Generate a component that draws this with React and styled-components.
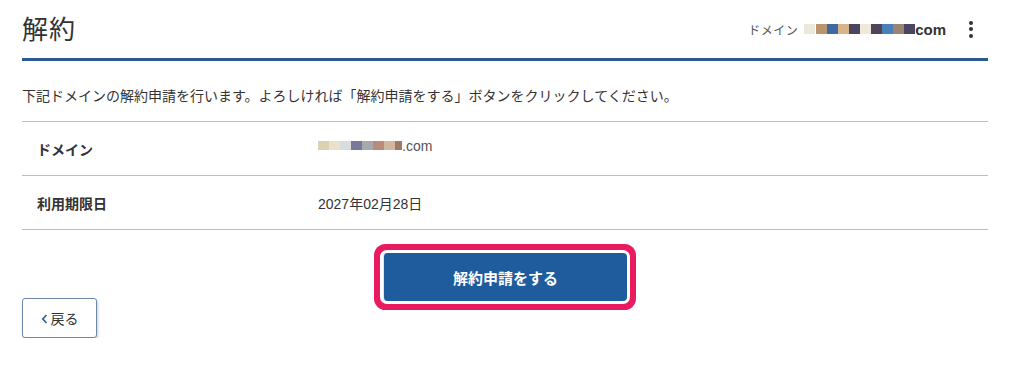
import React from "react";
import styled, { createGlobalStyle } from "styled-components";

const Global = createGlobalStyle`
  body {
    margin: 0;
    background: #fff;
    font-family: "Noto Sans CJK JP", "Liberation Sans", sans-serif;
    color: #333;
  }
`;

const Page = styled.div`
  width: 966px;
  padding: 0 36px 0 22px;
`;

const Header = styled.header`
  display: flex;
  align-items: center;
  justify-content: space-between;
  box-sizing: border-box;
  height: 61px;
  padding-bottom: 4px;
  border-bottom: 3px solid #2a5a8e;
`;

const Title = styled.h1`
  margin: 0;
  font-size: 26px;
  font-weight: 400;
  color: #333;
  letter-spacing: 1px;
`;

const HeaderRight = styled.div`
  display: flex;
  align-items: center;
  padding-top: 4px;
`;

const DomainLabel = styled.span`
  font-size: 12px;
  color: #555;
  margin-right: 6px;
  letter-spacing: 0.5px;
`;

const Blur = styled.span`
  display: inline-flex;
  height: ${(p) => p.h}px;
`;

const Swatch = styled.span`
  display: inline-block;
  width: ${(p) => p.w}px;
  height: 100%;
  background: ${(p) => p.c};
`;

const Tld = styled.span`
  font-family: "Liberation Sans", sans-serif;
  font-size: ${(p) => p.size}px;
  font-weight: ${(p) => (p.bold ? 700 : 400)};
  color: ${(p) => (p.bold ? "#333" : "#555")};
`;

const Kebab = styled.button`
  border: 0;
  background: none;
  padding: 0;
  margin: 0 15px 0 23px;
  display: flex;
  flex-direction: column;
  gap: 2.5px;
  span {
    width: 4px;
    height: 4px;
    border-radius: 50%;
    background: #333;
  }
`;

const Intro = styled.p`
  margin: 25px 0 17px;
  font-size: 14px;
  line-height: 18px;
  color: #333;
`;

const Table = styled.div`
  border-top: 1px solid #b4bfc8;
`;

const Row = styled.div`
  display: grid;
  grid-template-columns: 296px 1fr;
  align-items: center;
  height: 53px;
  border-bottom: 1px solid #b4bfc8;
  font-size: 14px;
`;

const Label = styled.div`
  padding-left: 15px;
  font-weight: 700;
  color: #333;
`;

const Value = styled.div`
  display: flex;
  align-items: center;
  color: #333;
  font-family: "Liberation Sans", "Noto Sans CJK JP", sans-serif;
  font-size: 14px;
  transform: translateY(${(p) => p.shift || 0}px);
`;

const Actions = styled.div`
  display: flex;
  justify-content: center;
  padding-top: 23px;
`;

const Primary = styled.button`
  width: 244px;
  height: 48px;
  border: 0;
  border-left: 1px solid #dfe8f2;
  border-radius: 4px;
  background: #1f5c9e;
  color: #fff;
  font-family: "Noto Sans CJK JP", sans-serif;
  font-size: 15px;
  font-weight: 700;
  box-shadow: 0 0 0 3px #fff, 0 0 0 9px #ea1a5f;
`;

const Back = styled.button`
  margin-top: -3px;
  width: 75px;
  height: 40px;
  background: #fff;
  border: 1px solid #6c8aa8;
  border-radius: 3px;
  box-shadow: 1px 2px 3px rgba(0, 0, 0, 0.2);
  font-family: "Noto Sans CJK JP", sans-serif;
  font-size: 14px;
  color: #333;
  display: flex;
  align-items: center;
  justify-content: center;
  gap: 3px;
  svg {
    margin-top: 1px;
  }
`;

const headerBlocks = [
  ["#ebe8dc", 11],
  ["#fff", 1],
  ["#b8956d", 11],
  ["#3d6aa2", 11],
  ["#d9b48a", 11],
  ["#4a4560", 11],
  ["#f0e8d8", 11],
  ["#4e4558", 11],
  ["#4a80b8", 11],
  ["#9c8570", 11],
  ["#4a4560", 11],
];

const rowBlocks = [
  ["#ddd2b0", 11],
  ["#ece0cc", 11],
  ["#d8dcdc", 11],
  ["#7a7898", 11],
  ["#a8a8b0", 11],
  ["#b88c78", 11],
  ["#d0b8a0", 11],
  ["#a07868", 7],
];

export default function App() {
  return (
    <>
      <Global />
      <Page>
        <Header>
          <Title>解約</Title>
          <HeaderRight>
            <DomainLabel>ドメイン</DomainLabel>
            <Blur h={10}>
              {headerBlocks.map(([c, w], i) => (
                <Swatch key={i} c={c} w={w} />
              ))}
            </Blur>
            <Tld size={15} bold>
              com
            </Tld>
            <Kebab aria-label="menu">
              <span />
              <span />
              <span />
            </Kebab>
          </HeaderRight>
        </Header>

        <Intro>
          下記ドメインの解約申請を行います。よろしければ「解約申請をする」ボタンをクリックしてください。
        </Intro>

        <Table>
          <Row>
            <Label>ドメイン</Label>
            <Value shift={-3}>
              <Blur h={9}>
                {rowBlocks.map(([c, w], i) => (
                  <Swatch key={i} c={c} w={w} />
                ))}
              </Blur>
              <Tld size={14}>.com</Tld>
            </Value>
          </Row>
          <Row>
            <Label>利用期限日</Label>
            <Value>2027年02月28日</Value>
          </Row>
        </Table>

        <Actions>
          <Primary>解約申請をする</Primary>
        </Actions>

        <Back>
          <svg width="7" height="10" viewBox="0 0 7 10">
            <path d="M5.5 1 L1.8 5 L5.5 9" fill="none" stroke="#2a5a8e" strokeWidth="1.6" />
          </svg>
          戻る
        </Back>
      </Page>
    </>
  );
}
